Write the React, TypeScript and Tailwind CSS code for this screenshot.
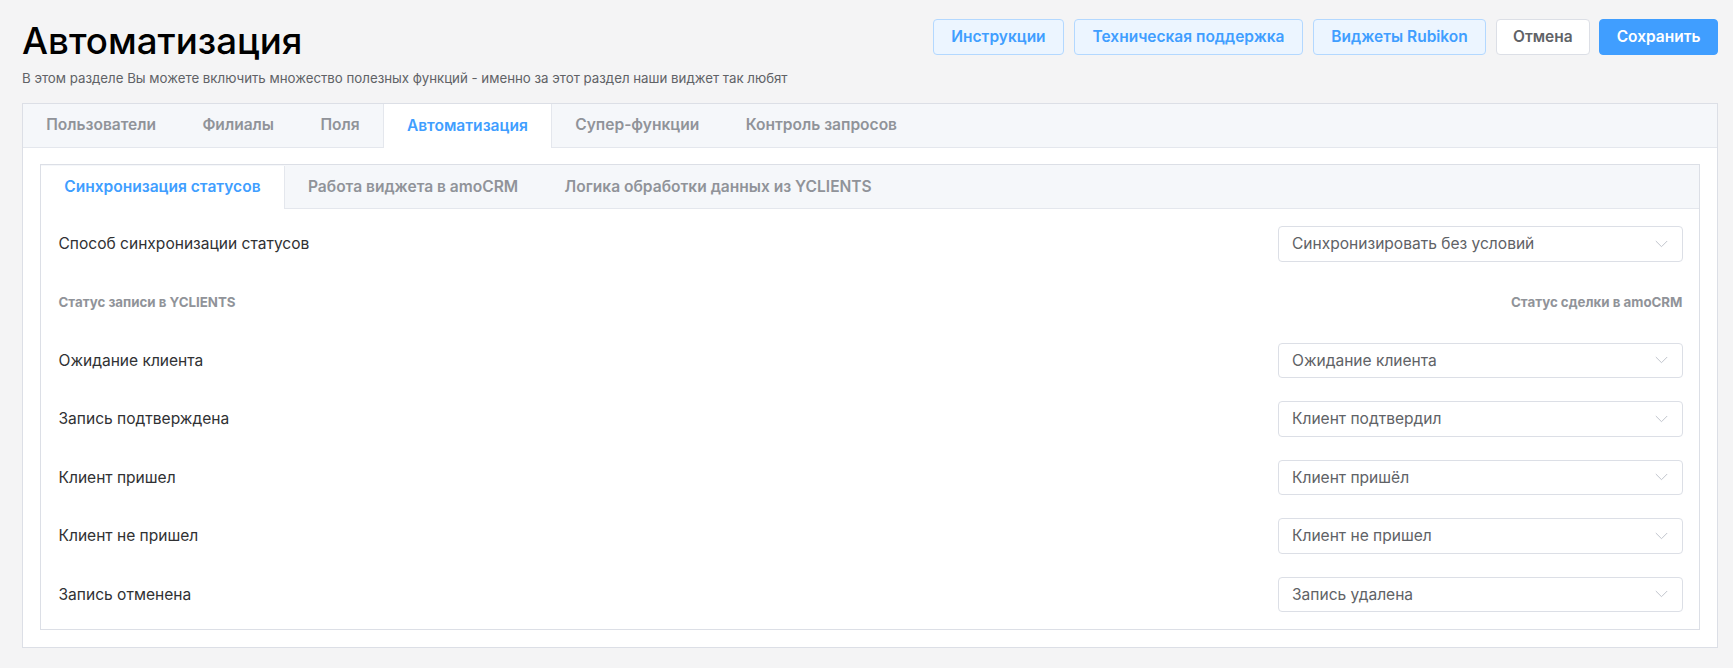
const mainTabs = ["Пользователи", "Филиалы", "Поля", "Автоматизация", "Супер-функции", "Контроль запросов"];
const innerTabs = ["Синхронизация статусов", "Работа виджета в amoCRM", "Логика обработки данных из YCLIENTS"];

const rows = [
  { label: "Ожидание клиента", value: "Ожидание клиента" },
  { label: "Запись подтверждена", value: "Клиент подтвердил" },
  { label: "Клиент пришел", value: "Клиент пришёл" },
  { label: "Клиент не пришел", value: "Клиент не пришел" },
  { label: "Запись отменена", value: "Запись удалена" },
];

const Select = ({ value }: { value: string }) => (
  <div className="flex h-[35.5px] w-[405px] items-center justify-between rounded-[4px] border border-[#dcdfe6] bg-white pl-[13.5px] pr-[14px] text-[#606266]">
    <span className="pt-[1px]">{value}</span>
    <svg width="13" height="8" viewBox="0 0 13 8" fill="none" stroke="#c0c4cc" strokeWidth="1">
      <path d="M0.8 1L6.5 6.7L12.2 1" />
    </svg>
  </div>
);

const Row = ({ label, value }: { label: string; value: string }) => (
  <div className="flex items-center justify-between">
    <span className="pt-[1px] text-[#303133]">{label}</span>
    <Select value={value} />
  </div>
);

const TabBar = ({ tabs, active, small }: { tabs: string[]; active: string; small?: boolean }) => (
  <div className={`flex border-b border-[#e4e7ed] bg-[#f5f7fa] text-[15.55px] font-semibold ${small ? "h-[44px] pt-[1px]" : "h-[43.5px]"}`}>
    {tabs.map((tab) => (
      <div
        key={tab}
        className={
          tab === active
            ? "mb-[-1px] flex items-center border-x border-[#e4e7ed] bg-white px-[23.2px] text-[#409eff] first:border-l-0"
            : "flex items-center px-[23.2px] text-[#909399]"
        }
      >
        {tab}
      </div>
    ))}
  </div>
);

const Btn = ({ children, kind }: { children: string; kind: "plain" | "default" | "primary" }) => {
  const styles = {
    plain: "border-[#b3d8ff] bg-[#ecf5ff] px-[17.7px] text-[#409eff]",
    default: "border-[#dcdfe6] bg-white px-[16px] text-[#606266]",
    primary: "border-[#409eff] bg-[#409eff] px-[16.5px] text-white",
  };
  return (
    <button className={`flex h-[35.5px] items-center rounded-[4px] border text-[15.5px] font-semibold ${styles[kind]}`}>
      {children}
    </button>
  );
};

export default function App() {
  return (
    <div className="h-[668px] overflow-hidden bg-[#f4f4f5] pl-[22px] pr-[15px] pt-[19px] font-['Inter',sans-serif] text-[15.55px] leading-none">
      <div className="flex items-start justify-between">
        <div>
          <h1 className="mt-[4px] text-[36.7px] font-medium leading-[36px] text-black">Автоматизация</h1>
          <p className="mt-[11px] text-[13.27px] leading-[16px] text-[#606266]">
            В этом разделе Вы можете включить множество полезных функций - именно за этот раздел наши виджет так любят
          </p>
        </div>
        <div className="flex gap-[9.5px]">
          <Btn kind="plain">Инструкции</Btn>
          <Btn kind="plain">Техническая поддержка</Btn>
          <Btn kind="plain">Виджеты Rubikon</Btn>
          <Btn kind="default">Отмена</Btn>
          <Btn kind="primary">Сохранить</Btn>
        </div>
      </div>

      <div className="mt-[17px] border border-[#dcdfe6] bg-white">
        <TabBar tabs={mainTabs} active="Автоматизация" />
        <div className="p-[17px] pt-[16px]">
          <div className="border border-[#dcdfe6]">
            <TabBar tabs={innerTabs} active="Синхронизация статусов" small />
            <div className="pb-[16.5px] pl-[17.5px] pr-[16.5px] pt-[17.5px]">
              <Row label="Способ синхронизации статусов" value="Синхронизировать без условий" />
              <div className="mb-[31px] mt-[32px] flex h-[18px] items-center justify-between text-[13.3px] font-bold text-[#909399]">
                <span>Статус записи в YCLIENTS</span>
                <span>Статус сделки в amoCRM</span>
              </div>
              <div className="flex flex-col gap-[23px]">
                {rows.map((row) => (
                  <Row key={row.label} label={row.label} value={row.value} />
                ))}
              </div>
            </div>
          </div>
        </div>
      </div>
    </div>
  );
}
